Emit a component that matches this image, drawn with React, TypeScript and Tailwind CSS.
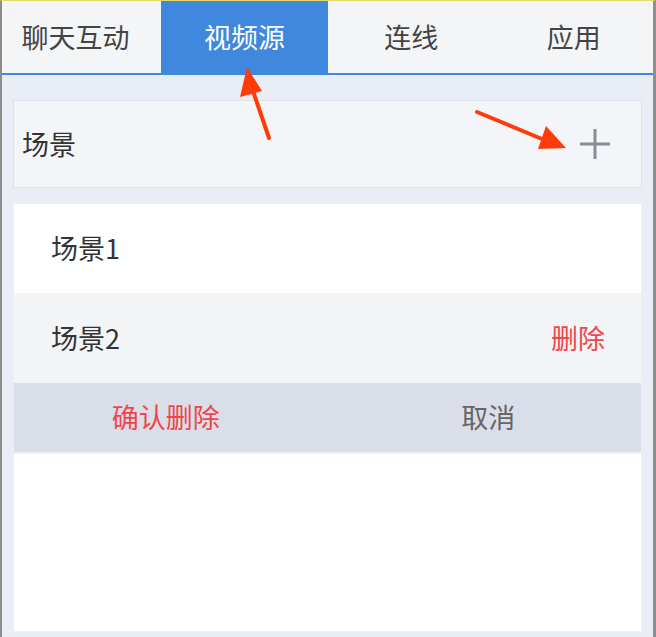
const tabs = ["聊天互动", "视频源", "连线", "应用"];

const font = { fontFamily: '"Noto Sans CJK SC", "Noto Sans", sans-serif' };

export default function App() {
  return (
    <div
      className="relative w-[656px] h-[637px] flex flex-col bg-[#e9edf5] border-l-2 border-l-[#8c8c8c] border-r-[3px] border-r-[#8f8f8f] border-t border-t-[#e6d96a] overflow-hidden"
      style={font}
    >
      {/* Tabs */}
      <div className="grid grid-cols-[159px_167px_1fr_1fr] h-[74px] bg-[#f4f5f7] border-b-2 border-b-[#4088dd]">
        {tabs.map((t, i) => (
          <div
            key={t}
            className={
              i === 1
                ? "flex items-center justify-center bg-[#4088dd] text-white text-[27px]"
                : i === 0
                  ? "flex items-center justify-center pr-[12px] text-[#444] text-[27px]"
                  : "flex items-center justify-center pl-[4px] text-[#444] text-[27px]"
            }
          >
            {t}
          </div>
        ))}
      </div>

      <div className="flex-1 flex flex-col pl-[11px] pr-[11px] pt-[25px] pb-[5px]">
        {/* Header */}
        <div className="h-[88px] flex items-center justify-between bg-[#f4f5f8] border border-[#dde1ea] pl-[8px] pr-[30px]">
          <span className="text-[27px] text-[#333]">场景</span>
          <svg width="32" height="32" viewBox="0 0 32 32">
            <path d="M16 1v30M1 16h30" stroke="#8a8d96" strokeWidth="3" />
          </svg>
        </div>

        {/* List */}
        <div className="mt-[15px] flex-1 flex flex-col bg-white border border-[#eef0f5]">
          <div className="h-[89px] flex items-center pl-[37px] bg-white">
            <span className="text-[27px] text-[#333]">场景1</span>
          </div>
          <div className="h-[90px] flex items-center justify-between pl-[37px] pr-[36px] bg-[#f3f4f6]">
            <span className="text-[27px] text-[#333]">场景2</span>
            <span className="text-[27px] text-[#f0464b]">删除</span>
          </div>
          <div className="h-[71px] grid grid-cols-2 bg-[#d9dee8] border-b-2 border-b-[#eef0f5]">
            <div className="flex items-center justify-center pr-[10px] text-[27px] text-[#f0464b]">确认删除</div>
            <div className="flex items-center justify-center pl-[8px] text-[27px] text-[#666]">取消</div>
          </div>
          <div className="flex-1 bg-white" />
        </div>
      </div>

      {/* Annotation arrows */}
      <svg className="absolute left-0 top-0 pointer-events-none" width="656" height="637">
        <path d="M267 137 L251 90" stroke="#ff3b0a" strokeWidth="4" strokeLinecap="round" />
        <polygon points="245,66 238,96 260,90" fill="#ff3b0a" />
        <path d="M475 111 L540 138" stroke="#ff3b0a" strokeWidth="4" strokeLinecap="round" />
        <polygon points="564,147 544,125 536,148" fill="#ff3b0a" />
      </svg>
    </div>
  );
}
